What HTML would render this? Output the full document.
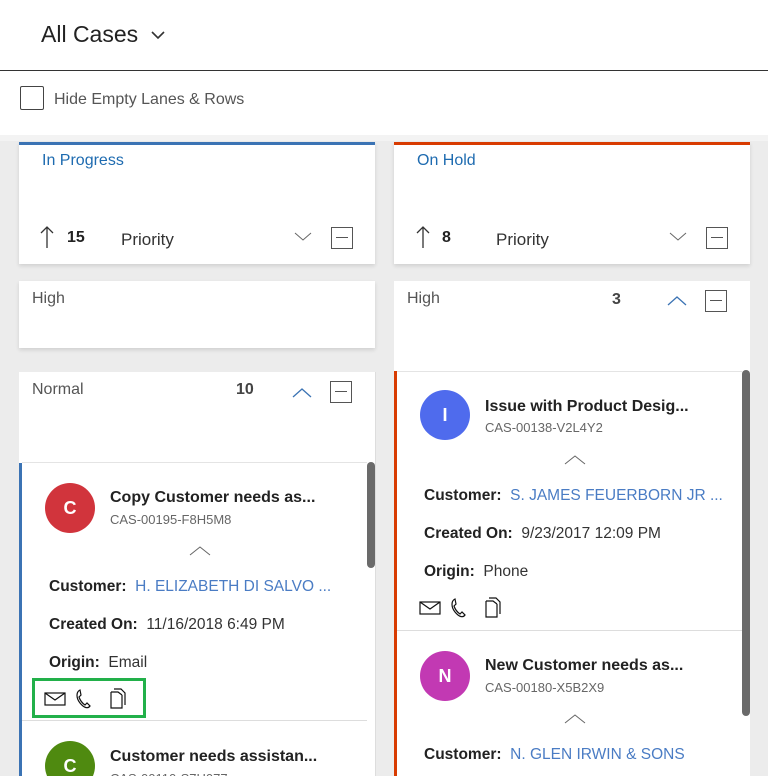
<!DOCTYPE html>
<html><head><style>
*{margin:0;padding:0;box-sizing:border-box}
html,body{width:768px;height:776px;overflow:hidden}
body{background:#fff;font-family:"Segoe UI","Liberation Sans",sans-serif;color:#333;position:relative}
.a{position:absolute}
.w{background:#fff;position:absolute}
.t{font-size:16px;white-space:nowrap;position:absolute;margin-top:2px}
.box{position:absolute;width:22px;height:22px;border:1px solid #555}
.box:after{content:"";position:absolute;left:4px;right:4px;top:9px;height:1px;background:#555}
.av{position:absolute;width:50px;height:50px;border-radius:50%;color:#fff;font-size:18px;text-align:center;line-height:50px;font-weight:bold}
.sh{box-shadow:0 2px 4px rgba(0,0,0,.12)}
</style></head><body>
<div class="t" style="left:41px;top:19px;font-size:23px;color:#222">All Cases</div>
<svg class="a" style="left:150px;top:29px" width="16" height="12"><path d="M2 3 L8 9 L14 3" stroke="#333" stroke-width="1.6" fill="none"/></svg>
<div class="a" style="left:0;top:70px;width:768px;height:1px;background:#333"></div>
<div class="a" style="left:20px;top:86px;width:24px;height:24px;border:1px solid #444;border-radius:2px"></div>
<div class="t" style="left:54px;top:89px;color:#555">Hide Empty Lanes &amp; Rows</div>
<div class="a" style="left:0;top:135px;width:768px;height:641px;background:#ececec"></div>
<div class="a" style="left:0;top:135px;width:768px;height:6px;background:#f3f3f3"></div>

<!-- left column -->
<div class="w sh" style="left:19px;top:142px;width:356px;height:122px;border-top:3px solid #3b73b4"></div>
<div class="t" style="left:42px;top:150px;color:#1e6bb0">In Progress</div>
<svg class="a" style="left:40px;top:225px" width="14" height="24"><path d="M7 23 V2 M1 8 L7 2 L13 8" stroke="#333" stroke-width="1.3" fill="none"/></svg>
<div class="t" style="left:67px;top:227px;font-weight:bold;color:#222">15</div>
<div class="t" style="left:121px;top:228px;font-size:17px">Priority</div>
<svg class="a" style="left:294px;top:232px" width="18" height="10"><path d="M1 1 L9 8 L17 1" stroke="#666" fill="none"/></svg>
<div class="box" style="left:331px;top:227px"></div>
<div class="w sh" style="left:19px;top:281px;width:356px;height:67px"></div>
<div class="t" style="left:32px;top:288px;color:#555">High</div>
<div class="w" style="left:19px;top:372px;width:356px;height:404px"></div>
<div class="t" style="left:32px;top:379px;color:#555">Normal</div>
<div class="t" style="left:236px;top:379px;font-weight:bold;color:#444">10</div>
<svg class="a" style="left:292px;top:387px" width="20" height="12"><path d="M1 10 L10 2 L19 10" stroke="#3b73b4" stroke-width="1.3" fill="none"/></svg>
<div class="box" style="left:330px;top:381px"></div>
<div class="a" style="left:19px;top:463px;width:3px;height:313px;background:#3b73b4"></div>
<div class="a" style="left:22px;top:462px;width:345px;height:1px;background:#e4e4e4"></div>
<div class="av" style="left:45px;top:483px;background:#d1343c">C</div>
<div class="t" style="left:110px;top:487px;font-weight:bold;color:#222">Copy Customer needs as...</div>
<div class="t" style="left:110px;top:510px;font-size:13px;color:#666">CAS-00195-F8H5M8</div>
<svg class="a" style="left:189px;top:545px" width="22" height="12"><path d="M1 10 L11 2 L21 10" stroke="#666" fill="none"/></svg>
<div class="t" style="left:49px;top:576px;font-size:15.5px"><b style="color:#222">Customer:</b>&nbsp; <span style="color:#4a7cc4">H. ELIZABETH DI SALVO ...</span></div>
<div class="t" style="left:49px;top:614px;font-size:15.5px"><b style="color:#222">Created On:</b>&nbsp; 11/16/2018 6:49 PM</div>
<div class="t" style="left:49px;top:652px;font-size:15.5px"><b style="color:#222">Origin:</b>&nbsp; Email</div>
<div class="a" style="left:32px;top:678px;width:114px;height:40px;border:3px solid #22b04a"></div>
<svg class="a" style="left:44px;top:688px" width="90" height="22">
<rect x="1" y="5" width="20" height="12" fill="none" stroke="#111" stroke-width="1.2"/><path d="M1 5 L11 12 L21 5" fill="none" stroke="#111" stroke-width="1.2"/>
<path d="M36 2 C32 4 32 10 36 15 C40 20 44 21 46 18 L43 15 L41 17 C38 15 36 12 35 9 L37 7 L36 2Z" fill="none" stroke="#111" stroke-width="1.2"/>
<path d="M67 4 V20 H78 V7 M67 4 H74 L78 7 V7" fill="none" stroke="#111" stroke-width="1.2"/><path d="M70 1 H77 L81 5 V17" fill="none" stroke="#111" stroke-width="1.2"/>
</svg>
<div class="a" style="left:22px;top:720px;width:345px;height:1px;background:#ddd"></div>
<div class="av" style="left:45px;top:741px;background:#4f8a10">C</div>
<div class="t" style="left:110px;top:746px;font-weight:bold;color:#222">Customer needs assistan...</div>
<div class="t" style="left:110px;top:769px;font-size:13px;color:#666">CAS-00110-S7H077</div>
<div class="a" style="left:367px;top:462px;width:8px;height:106px;background:#6a6a6a;border-radius:4px"></div>
<div class="a" style="left:375px;top:372px;width:1px;height:404px;background:#ddd"></div>

<!-- right column -->
<div class="w sh" style="left:394px;top:142px;width:356px;height:122px;border-top:3px solid #d83b01"></div>
<div class="t" style="left:417px;top:150px;color:#1e6bb0">On Hold</div>
<svg class="a" style="left:416px;top:225px" width="14" height="24"><path d="M7 23 V2 M1 8 L7 2 L13 8" stroke="#333" stroke-width="1.3" fill="none"/></svg>
<div class="t" style="left:442px;top:227px;font-weight:bold;color:#222">8</div>
<div class="t" style="left:496px;top:228px;font-size:17px">Priority</div>
<svg class="a" style="left:669px;top:232px" width="18" height="10"><path d="M1 1 L9 8 L17 1" stroke="#666" fill="none"/></svg>
<div class="box" style="left:706px;top:227px"></div>
<div class="w" style="left:394px;top:281px;width:356px;height:495px"></div>
<div class="t" style="left:407px;top:288px;color:#555">High</div>
<div class="t" style="left:612px;top:289px;font-weight:bold;color:#444">3</div>
<svg class="a" style="left:667px;top:295px" width="20" height="12"><path d="M1 10 L10 2 L19 10" stroke="#3b73b4" stroke-width="1.3" fill="none"/></svg>
<div class="box" style="left:705px;top:290px"></div>
<div class="a" style="left:394px;top:371px;width:3px;height:405px;background:#d83b01"></div>
<div class="a" style="left:397px;top:371px;width:345px;height:1px;background:#e4e4e4"></div>
<div class="av" style="left:420px;top:390px;background:#4f6bed">I</div>
<div class="t" style="left:485px;top:396px;font-weight:bold;color:#222">Issue with Product Desig...</div>
<div class="t" style="left:485px;top:418px;font-size:13px;color:#666">CAS-00138-V2L4Y2</div>
<svg class="a" style="left:564px;top:454px" width="22" height="12"><path d="M1 10 L11 2 L21 10" stroke="#666" fill="none"/></svg>
<div class="t" style="left:424px;top:485px;font-size:15.5px"><b style="color:#222">Customer:</b>&nbsp; <span style="color:#4a7cc4">S. JAMES FEUERBORN JR ...</span></div>
<div class="t" style="left:424px;top:523px;font-size:15.5px"><b style="color:#222">Created On:</b>&nbsp; 9/23/2017 12:09 PM</div>
<div class="t" style="left:424px;top:561px;font-size:15.5px"><b style="color:#222">Origin:</b>&nbsp; Phone</div>
<svg class="a" style="left:419px;top:597px" width="90" height="22">
<rect x="1" y="5" width="20" height="12" fill="none" stroke="#111" stroke-width="1.2"/><path d="M1 5 L11 12 L21 5" fill="none" stroke="#111" stroke-width="1.2"/>
<path d="M36 2 C32 4 32 10 36 15 C40 20 44 21 46 18 L43 15 L41 17 C38 15 36 12 35 9 L37 7 L36 2Z" fill="none" stroke="#111" stroke-width="1.2"/>
<path d="M67 4 V20 H78 V7 M67 4 H74 L78 7 V7" fill="none" stroke="#111" stroke-width="1.2"/><path d="M70 1 H77 L81 5 V17" fill="none" stroke="#111" stroke-width="1.2"/>
</svg>
<div class="a" style="left:397px;top:630px;width:345px;height:1px;background:#ddd"></div>
<div class="av" style="left:420px;top:651px;background:#c239b3">N</div>
<div class="t" style="left:485px;top:655px;font-weight:bold;color:#222">New Customer needs as...</div>
<div class="t" style="left:485px;top:678px;font-size:13px;color:#666">CAS-00180-X5B2X9</div>
<svg class="a" style="left:564px;top:713px" width="22" height="12"><path d="M1 10 L11 2 L21 10" stroke="#666" fill="none"/></svg>
<div class="t" style="left:424px;top:744px;font-size:15.5px"><b style="color:#222">Customer:</b>&nbsp; <span style="color:#4a7cc4">N. GLEN IRWIN &amp; SONS</span></div>
<div class="a" style="left:742px;top:370px;width:8px;height:346px;background:#6a6a6a;border-radius:4px"></div>
</body></html>
